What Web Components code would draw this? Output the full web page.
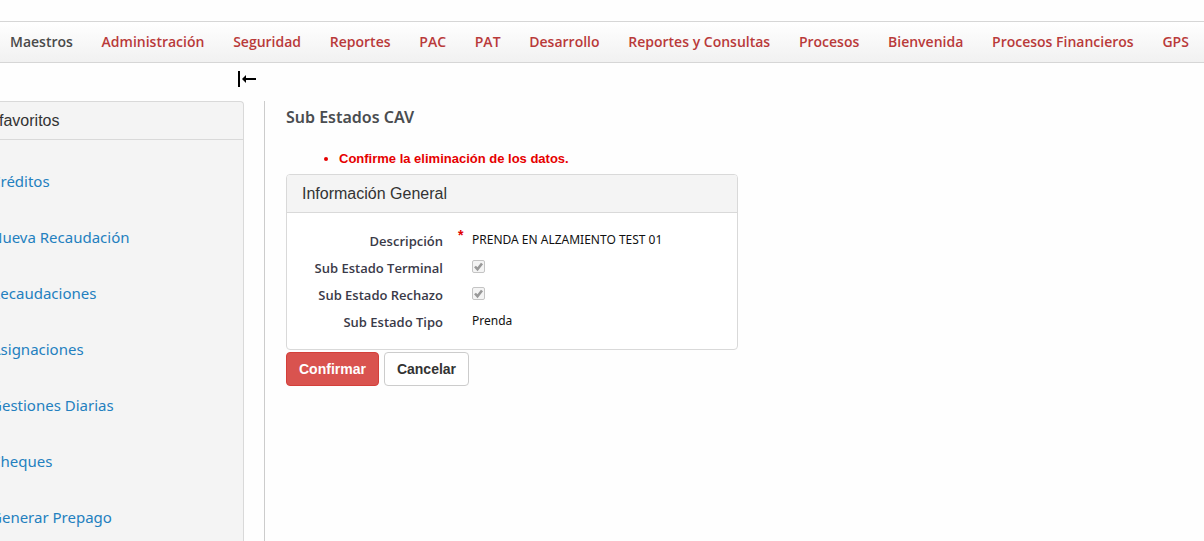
<!DOCTYPE html>
<html lang="es">
<head>
<meta charset="utf-8">
<title>Sub Estados CAV</title>
<style>
  html, body { margin: 0; }
  body {
    min-height: 100vh; background: #fefefe; color: #333;
    font-family: "Trebuchet MS", "Open Sans", sans-serif; font-size: 14px; line-height: 20px;
    --ui: "Liberation Sans", Arial, sans-serif;
    --wide: "Trebuchet MS", "Noto Sans", sans-serif;
    --line: #d9d9d9; --panel: #f4f4f4;
  }
</style>
</head>
<body>
<app-shell>
  <nav-bar slot="nav">
    <nav-item current>Maestros</nav-item>
    <nav-item>Administración</nav-item>
    <nav-item>Seguridad</nav-item>
    <nav-item>Reportes</nav-item>
    <nav-item>PAC</nav-item>
    <nav-item>PAT</nav-item>
    <nav-item>Desarrollo</nav-item>
    <nav-item>Reportes y Consultas</nav-item>
    <nav-item>Procesos</nav-item>
    <nav-item>Bienvenida</nav-item>
    <nav-item>Procesos Financieros</nav-item>
    <nav-item>GPS</nav-item>
  </nav-bar>
  <side-toggle slot="tools"></side-toggle>
  <side-panel slot="side">
    <span slot="title">favoritos</span>
    <side-link>Créditos</side-link>
    <side-link>Nueva Recaudación</side-link>
    <side-link>Recaudaciones</side-link>
    <side-link>Asignaciones</side-link>
    <side-link>Gestiones Diarias</side-link>
    <side-link>Cheques</side-link>
    <side-link>Generar Prepago</side-link>
  </side-panel>
  <status-form></status-form>
</app-shell>
<script>
const define = (name, html) => {
  const template = document.createElement('template');
  template.innerHTML = html;
  customElements.define(name, class extends HTMLElement {
    constructor() {
      super();
      this.attachShadow({ mode: 'open' }).append(template.content.cloneNode(true));
    }
  });
};

define('app-shell', `
<style>
  :host { display: flex; flex-direction: column; box-sizing: border-box; min-height: 100vh; padding-top: 21px; overflow: hidden; }
  .tools { display: flex; width: 257px; height: 38px; justify-content: flex-end; }
  .cols { display: grid; grid-template-columns: 244px minmax(0, 1fr); gap: 20px; flex: 1; }
  main { border-left: 1px solid #ccc; padding: 6px 20px 0 21px; }
</style>
<slot name="nav"></slot>
<div class="tools"><slot name="tools"></slot></div>
<div class="cols">
  <slot name="side"></slot>
  <main><slot></slot></main>
</div>`);

define('nav-bar', `
<style>
  :host { display: block; border: solid #d6d6d6; border-width: 1px 0; background: linear-gradient(#fff, #f1f1f1); }
  nav { display: flex; justify-content: space-between; padding: 10px 15px 10px 10px; }
</style>
<nav><slot></slot></nav>`);

define('nav-item', `
<style>
  :host { display: block; --c: #b93a3a; }
  :host([current]) { --c: #4a4a4a; }
  a { color: var(--c); font-weight: 600; text-decoration: none; white-space: nowrap; }
</style>
<a href="#"><slot></slot></a>`);

define('side-toggle', `
<style>
  :host { display: block; padding-top: 8px; }
  button { display: block; padding: 0; border: 0; background: none; cursor: pointer; }
  svg { display: block; }
</style>
<button type="button" aria-label="Ocultar menú"><svg width="20" height="16" viewBox="0 0 20 16"><path d="M1 0h2v16H1zM5 8l4-4v3h10v2H9v3z"/></svg></button>`);

define('side-panel', `
<style>
  :host { display: flex; flex-direction: column; margin-left: -20px; border: 1px solid var(--line); border-bottom: 0; border-radius: 4px 4px 0 0; background: var(--panel); }
  h2 { margin: 0; padding: 9px 18px; border-bottom: 1px solid var(--line); font: 16px/19px var(--ui); color: #333; }
  nav { display: grid; gap: 32px; padding: 29px 10px 12px; }
</style>
<h2><slot name="title"></slot></h2>
<nav><slot></slot></nav>`);

define('side-link', `
<style>
  :host { display: block; }
  a { display: block; font-family: var(--wide); font-size: 15px; line-height: 24px; color: #2380bf; text-decoration: none; white-space: nowrap; }
</style>
<a href="#"><slot></slot></a>`);

define('info-panel', `
<style>
  :host { display: block; max-width: 450px; border: 1px solid var(--line); border-radius: 4px; background: #fff; }
  h2 { margin: 0; padding: 9px 15px; border-bottom: 1px solid var(--line); border-radius: 3px 3px 0 0; background: var(--panel); font: 16px/19px var(--ui); color: #333; }
  .body { padding: 14px 15px; }
</style>
<h2><slot name="title"></slot></h2>
<div class="body"><slot></slot></div>`);

define('form-row', `
<style>
  :host { display: grid; grid-template-columns: 141px 29px minmax(0, 1fr); height: 27px; align-items: center; }
  .label { text-align: right; font-size: 13px; font-weight: 600; color: #3a3a48; white-space: nowrap; }
  .mark { padding: 0 0 12px 15px; color: #e00000; font: bold 14px/16px var(--ui); }
  .value { padding-bottom: 2px; font-family: var(--wide); font-size: 12px; color: #111; }
  ::slotted(input) { margin-bottom: 2px; }
</style>
<div class="label"><slot name="label"></slot></div>
<div class="mark"><slot name="mark"></slot></div>
<div class="value"><slot></slot></div>`);

define('app-button', `
<style>
  :host { display: block; }
  button { display: block; padding: 6px 12px; border: 1px solid #ccc; border-radius: 4px; background: #fff; color: #333; font: bold 14px/20px var(--ui); cursor: pointer; }
  :host([primary]) button { background: #d9534f; border-color: #d43f3a; color: #fff; }
</style>
<button type="button"><slot></slot></button>`);

define('status-form', `
<style>
  :host { display: block; }
  h1 { margin: 0; font-family: var(--wide); font-size: 16px; line-height: 20px; font-weight: 600; color: #4a4d50; }
  ul { margin: 22px 0 5px; padding-left: 53px; color: #e60000; font: bold 13px/20px var(--ui); }
  input { appearance: none; display: block; margin: 0; width: 13px; height: 13px; box-sizing: border-box; border: 1px solid #c4c4c4; border-radius: 2px;
    background: #f4f4f4 url("data:image/svg+xml,%3Csvg xmlns='http://www.w3.org/2000/svg' viewBox='0 0 11 11'%3E%3Cpath d='M2 5.5l2.5 2.8L9 2.5' fill='none' stroke='%23999' stroke-width='2.6'/%3E%3C/svg%3E") center / 11px 11px; }
  .actions { display: flex; gap: 5px; margin-top: 2px; }
</style>
<h1>Sub Estados CAV</h1>
<ul><li>Confirme la eliminación de los datos.</li></ul>
<info-panel>
  <span slot="title">Información General</span>
  <form-row><span slot="label">Descripción</span><span slot="mark">*</span>PRENDA EN ALZAMIENTO TEST 01</form-row>
  <form-row><label slot="label" for="terminal">Sub Estado Terminal</label><input id="terminal" type="checkbox" checked disabled></form-row>
  <form-row><label slot="label" for="rechazo">Sub Estado Rechazo</label><input id="rechazo" type="checkbox" checked disabled></form-row>
  <form-row><span slot="label">Sub Estado Tipo</span>Prenda</form-row>
</info-panel>
<div class="actions">
  <app-button primary>Confirmar</app-button>
  <app-button>Cancelar</app-button>
</div>`);
</script>
</body>
</html>
